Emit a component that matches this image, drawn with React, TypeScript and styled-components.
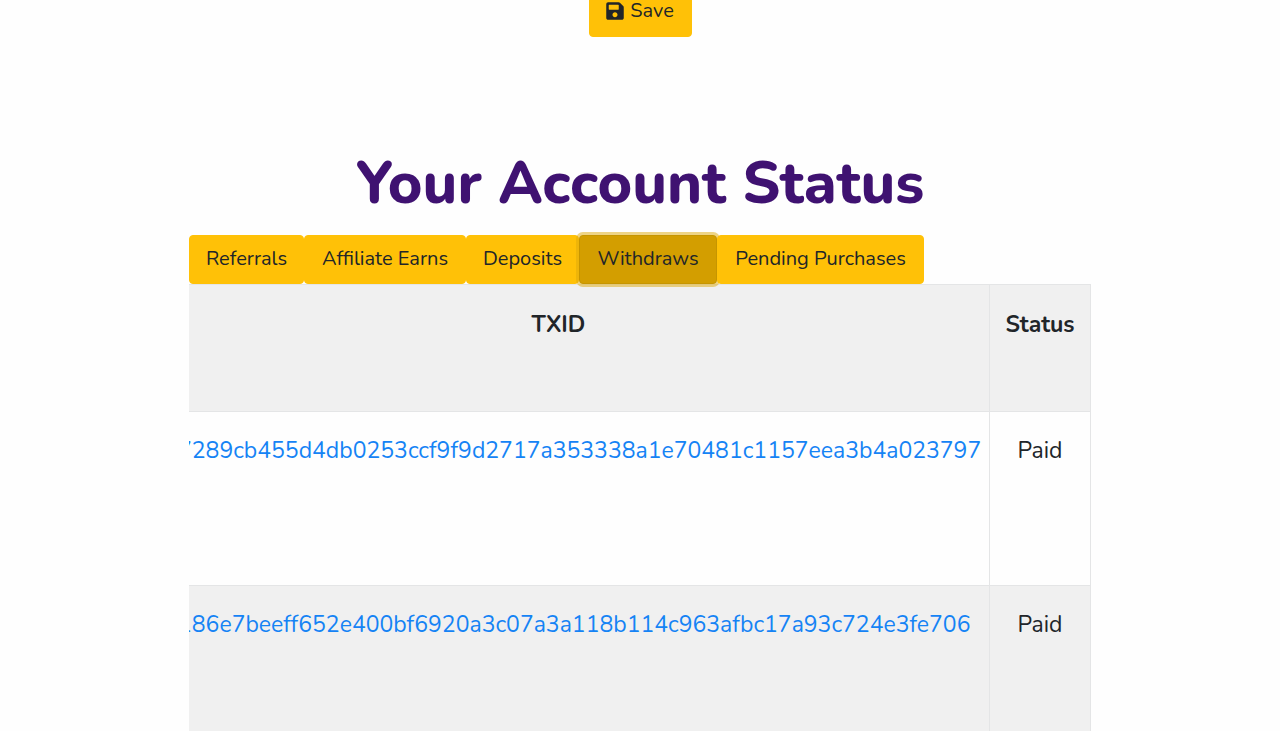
import React from "react";
import styled, { createGlobalStyle } from "styled-components";

const GlobalStyle = createGlobalStyle`
  * { box-sizing: border-box; }
  body {
    margin: 0;
    background: #fefefe;
    color: #212529;
    font-family: Nunito, Lato, sans-serif;
    font-size: 23px;
    line-height: 32px;
  }
`;

const Page = styled.main`
  height: 100vh;
  overflow: hidden;
  padding: 0 16px;
`;

const Container = styled.div`
  max-width: 902px;
  margin: 0 auto;
  display: flex;
  flex-direction: column;
`;

const Button = styled.button<{ $active?: boolean }>`
  display: flex;
  align-items: center;
  justify-content: center;
  gap: 6px;
  height: 49px;
  padding: 0 0 2px;
  border: 1px solid ${(p) => (p.$active ? "#c69500" : "#ffc107")};
  border-radius: 4px;
  background: ${(p) => (p.$active ? "#d39e00" : "#ffc107")};
  box-shadow: ${(p) => (p.$active ? "0 0 0 3px rgba(222, 170, 12, 0.5)" : "none")};
  color: #212529;
  font: inherit;
  font-size: 20px;
  white-space: nowrap;
  cursor: pointer;
`;

const SaveButton = styled(Button)`
  align-self: center;
  width: 103px;
  height: 50px;
  margin-top: -13px;
`;

const Title = styled.h1`
  margin: 110px 0 14px;
  color: #3f1271;
  font-size: 59px;
  font-weight: 800;
  line-height: 74px;
  text-align: center;
`;

const Tabs = styled.nav`
  position: relative;
  z-index: 1;
  display: grid;
  grid-template-columns: 115px 162px 113px 138px 207px;
`;

const TableClip = styled.div`
  display: flex;
  justify-content: flex-end;
  overflow: hidden;
`;

const Table = styled.table`
  flex: none;
  width: 964px;
  table-layout: fixed;
  border-collapse: collapse;
`;

const Row = styled.tr<{ $shaded?: boolean }>`
  height: 174px;
  background: ${(p) => (p.$shaded ? "#f0f0f0" : "#fefefe")};
`;

const HeadRow = styled(Row)`
  height: 127px;
`;

const HeadCell = styled.th`
  padding: 24px 16px;
  border: 1px solid #e4e5e6;
  font-weight: 700;
  text-align: center;
  vertical-align: top;
`;

const StatusHead = styled(HeadCell)`
  width: 101px;
  padding: 24px 0;
`;

const HashCell = styled.td`
  padding: 23px 0 23px 50px;
  border: 1px solid #e4e5e6;
  vertical-align: top;
  white-space: nowrap;
`;

const StatusCell = styled.td`
  padding: 23px 0;
  border: 1px solid #e4e5e6;
  text-align: center;
  vertical-align: top;
`;

const HashLink = styled.a`
  color: #1583f5;
  text-decoration: none;
`;

const SaveIcon = () => (
  <svg width="18" height="20" viewBox="0 0 448 512" fill="currentColor" aria-hidden="true">
    <path d="M433.941 129.941l-83.882-83.882A48 48 0 0 0 316.118 32H48C21.49 32 0 53.49 0 80v352c0 26.51 21.49 48 48 48h352c26.51 0 48-21.49 48-48V163.882a48 48 0 0 0-14.059-33.941zM224 416c-35.346 0-64-28.654-64-64 0-35.346 28.654-64 64-64s64 28.654 64 64c0 35.346-28.654 64-64 64zm96-304.52V212c0 6.627-5.373 12-12 12H76c-6.627 0-12-5.373-12-12V108c0-6.627 5.373-12 12-12h228.52c3.183 0 6.235 1.264 8.485 3.515l3.48 3.48A11.996 11.996 0 0 1 320 111.48z" />
  </svg>
);

const tabs = ["Referrals", "Affiliate Earns", "Deposits", "Withdraws", "Pending Purchases"];

const withdraws = [
  { txid: "7289cb455d4db0253ccf9f9d2717a353338a1e70481c1157eea3b4a023797", status: "Paid" },
  { txid: "186e7beeff652e400bf6920a3c07a3a118b114c963afbc17a93c724e3fe706", status: "Paid" },
];

export default function App() {
  return (
    <Page>
      <GlobalStyle />
      <Container>
        <SaveButton type="button">
          <SaveIcon />
          Save
        </SaveButton>
        <Title>Your Account Status</Title>
        <Tabs>
          {tabs.map((tab) => (
            <Button key={tab} type="button" $active={tab === "Withdraws"}>
              {tab}
            </Button>
          ))}
        </Tabs>
        <TableClip>
          <Table>
            <thead>
              <HeadRow $shaded>
                <HeadCell scope="col">TXID</HeadCell>
                <StatusHead scope="col">Status</StatusHead>
              </HeadRow>
            </thead>
            <tbody>
              {withdraws.map((w, i) => (
                <Row key={w.txid} $shaded={i % 2 === 1}>
                  <HashCell>
                    <HashLink href={`#${w.txid}`}>{w.txid}</HashLink>
                  </HashCell>
                  <StatusCell>{w.status}</StatusCell>
                </Row>
              ))}
            </tbody>
          </Table>
        </TableClip>
      </Container>
    </Page>
  );
}
